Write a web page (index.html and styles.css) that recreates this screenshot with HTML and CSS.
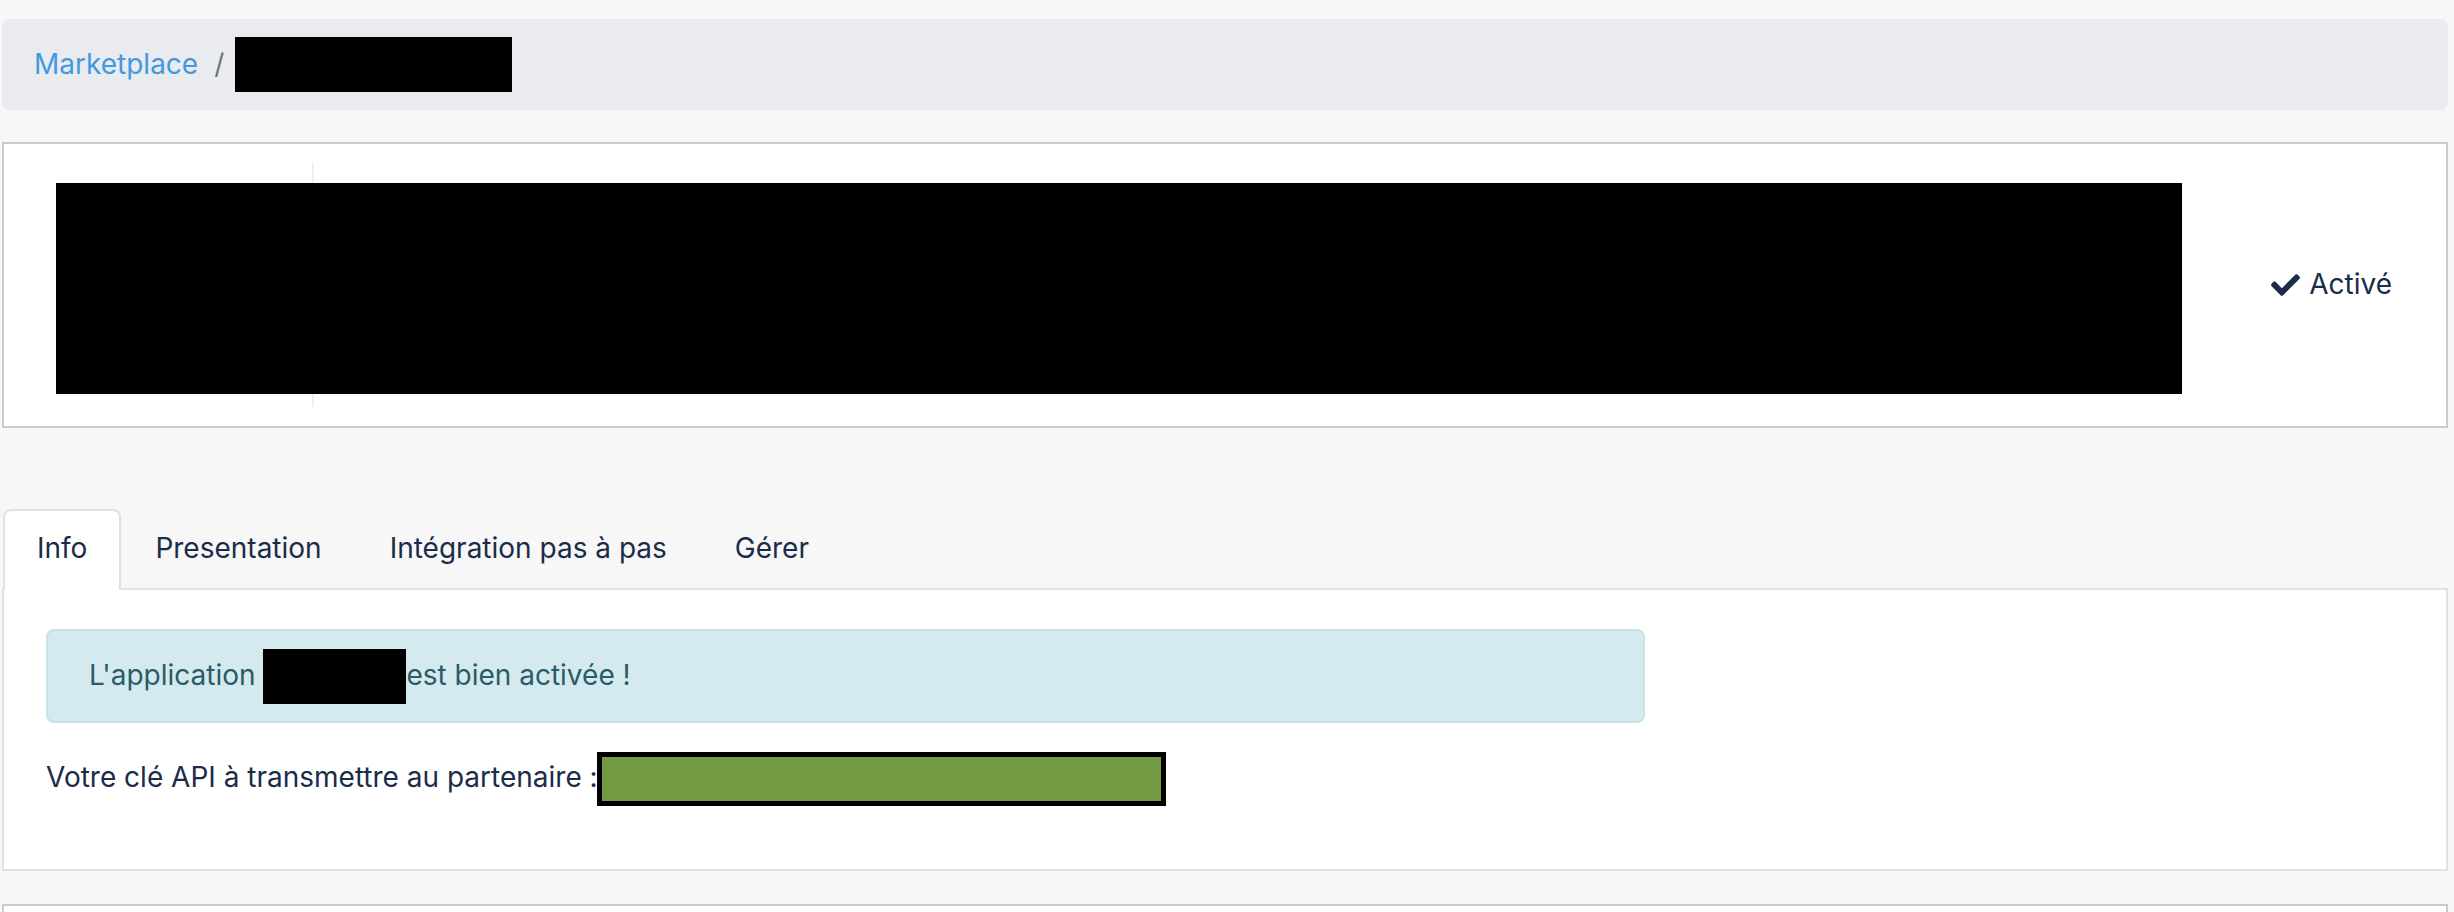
FILE: index.html
```html
<!DOCTYPE html>
<html lang="fr">
<head>
  <meta charset="UTF-8" />
  <title>Marketplace</title>
  <link rel="stylesheet" href="styles.css">
</head>
<body>

  <nav class="breadcrumb">
    <a href="#" class="crumb-link">Marketplace</a>
    <span class="crumb-sep">/</span>
    <span class="redact crumb-redact"></span>
  </nav>

  <div class="app-card">
    <div class="app-row">
      <div class="app-logo"></div>
      <div class="app-title"></div>
      <div class="app-status">
        <svg class="check" viewBox="0 62 512 388" width="29" height="22">
          <path d="M173.898 439.404l-166.4-166.4c-9.997-9.997-9.997-26.206 0-36.204l36.203-36.204c9.997-9.998 26.207-9.998 36.204 0L192 312.69 432.095 72.596c9.997-9.997 26.207-9.997 36.204 0l36.203 36.204c9.997 9.997 9.997 26.206 0 36.204l-294.4 294.401c-9.998 9.997-26.207 9.997-36.204-.001z" fill="currentColor"/>
        </svg>
        <span>Activé</span>
      </div>
    </div>
    <div class="redact card-redact"></div>
  </div>

  <ul class="tabs">
    <li class="tab active">Info</li>
    <li class="tab">Presentation</li>
    <li class="tab">Intégration pas à pas</li>
    <li class="tab">Gérer</li>
  </ul>

  <div class="tab-panel">
    <div class="alert">L'application <span class="redact alert-redact"></span>est bien activée !</div>
    <p class="api-line">Votre clé API à transmettre au partenaire : <span class="api-key"></span></p>
  </div>

  <div class="next-card"></div>

</body>
</html>
```

FILE: styles.css
```css
body { margin: 0; padding: 19px 6px 0 2px; background: #f7f7f7; font-family: Inter, "Noto Sans", sans-serif; font-size: 28px; line-height: 43.5px; color: #1a2c4a; }
.redact { background: #000; display: inline-block; }

.breadcrumb { display: flex; align-items: center; height: 91px; box-sizing: border-box; padding: 0 32px; background: #eaebef; border-radius: 8px; }
.crumb-link { color: #4299e1; text-decoration: none; }
.crumb-sep { color: #6c757d; margin: 0 11px 0 16px; }
.crumb-redact { width: 277px; height: 55px; }

.app-card { position: relative; margin-top: 32px; background: #fff; border: 2px solid #cbcbcb; padding: 19px 54px 19px 0; }
.app-row { display: flex; align-items: center; }
.app-logo { width: 308px; height: 244px; border-right: 2px solid #efefef; }
.app-title { flex: 1; }
.app-status { display: flex; align-items: center; gap: 9px; }
.check { color: #1a2c4a; }
.card-redact { position: absolute; left: 52px; top: 39px; width: 2126px; height: 211px; }

.tabs { list-style: none; margin: 81px 0 0; padding: 0; display: flex; border-bottom: 2px solid #dee2e6; }
.tab { padding: 16px 32px 17px; border: 2px solid transparent; border-bottom: none; border-radius: 8px 8px 0 0; margin-bottom: -2px; }
.tab:first-child { margin-left: 1px; }
.tab.active { background: #fff; border-color: #dee2e6; padding-bottom: 19px; }

.tab-panel { background: #fff; border: 2px solid #dee2e6; border-top: none; padding: 39px 42px 34px; }
.alert { width: 1599px; box-sizing: border-box; padding: 23px 41px; background: #d5eaef; border: 2px solid #c6e3ea; border-radius: 8px; color: #2b5b67; margin-bottom: 29px; }
.alert-redact { width: 143px; height: 55px; margin: -6px 0; vertical-align: middle; }
.api-line { margin: 0 0 29px; }
.api-key { display: inline-block; box-sizing: border-box; width: 569px; height: 54px; margin-left: -9px; background: #729a42; border: 5px solid #000; vertical-align: middle; }

.next-card { margin-top: 33px; height: 60px; background: #fff; border: 2px solid #cbcbcb; }
```
